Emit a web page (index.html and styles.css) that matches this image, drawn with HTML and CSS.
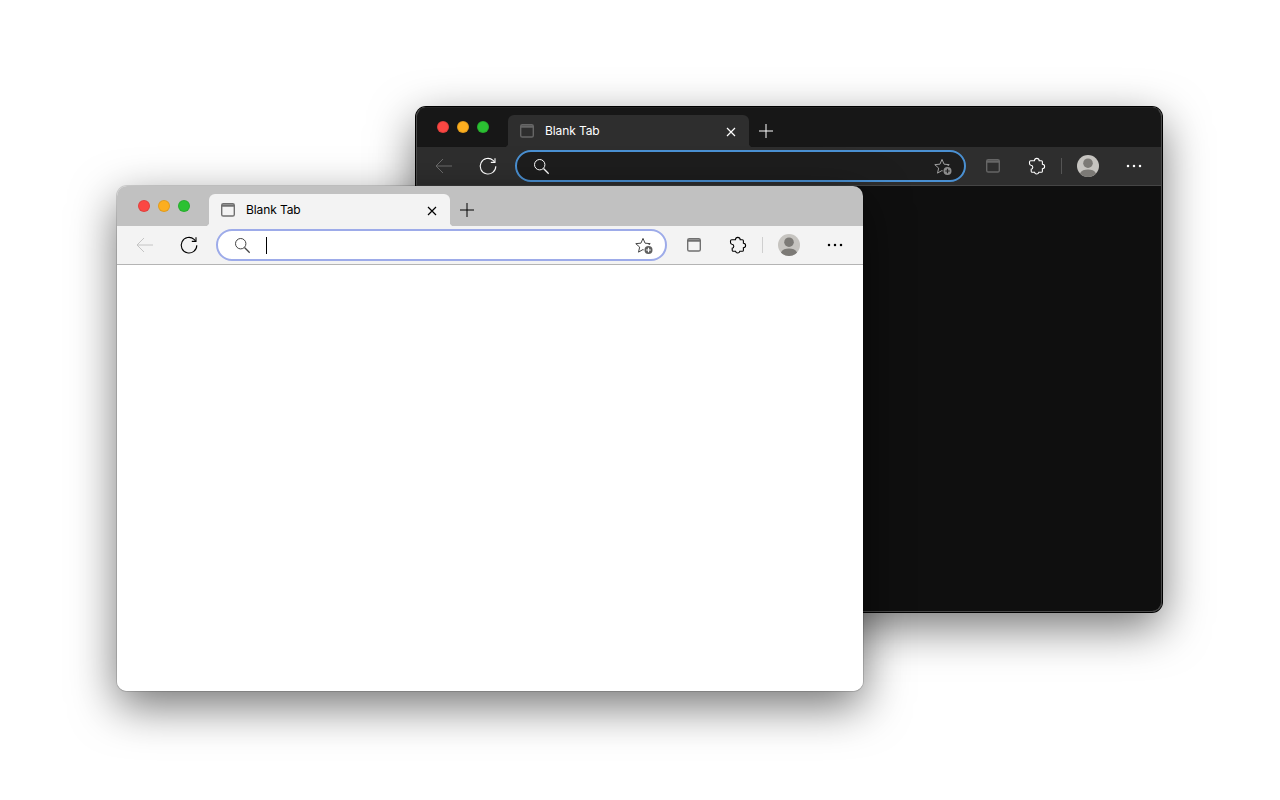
FILE: index.html
```html
<!DOCTYPE html>
<html lang="en">
<head>
<meta charset="utf-8">
<title>Blank Tab</title>
<link rel="stylesheet" href="styles.css">
</head>
<body>
<svg class="sprite" aria-hidden="true">
  <symbol id="i-back" viewBox="0 0 20 20"><path d="M18 10H2M9 3l-7 7 7 7" fill="none" stroke="currentColor" stroke-width="1"/></symbol>
  <symbol id="i-reload" viewBox="0 0 20 20"><path d="M17.800 10.200a7.800 7.800 0 1 1-2.700-5.900l1.400 1.500" fill="none" stroke="currentColor" stroke-width="1.100"/><path d="M17 2.200v4.200h-4.200" fill="none" stroke="currentColor" stroke-width="1.100"/></symbol>
  <symbol id="i-search" viewBox="0 0 20 20"><circle cx="8.700" cy="8.700" r="5.200" fill="none" stroke="currentColor" stroke-width="1"/><path d="M12.500 12.500l5.200 5.200" fill="none" stroke="currentColor" stroke-width="1.300"/></symbol>
  <symbol id="i-star" viewBox="0 0 20 20"><path d="M9 2.400l2.060 4.770 5.170.48-3.900 3.430 1.140 5.070L9 13.500l-4.470 2.650 1.140-5.070-3.900-3.430 5.170-.48z" fill="none" stroke="currentColor" stroke-width="1" stroke-linejoin="round"/><circle cx="14.500" cy="14" r="4.900" fill="var(--addr)"/><circle cx="14.500" cy="14" r="4" fill="var(--badge)"/><path d="M14.500 11.700v4.600M12.200 14h4.600" stroke="var(--badge-plus)" stroke-width="1.200"/></symbol>
  <symbol id="i-tab" viewBox="0 0 16 16"><rect x="1.700" y="1.700" width="12.600" height="12.300" rx="1.600" fill="none" stroke="currentColor" stroke-width="1.400"/><path d="M2 3.600h12" stroke="currentColor" stroke-width="2.400"/></symbol>
  <symbol id="i-puzzle" viewBox="0 0 20 20"><path d="M9.800 2.400c1.400 0 2.300 1 2.400 2.300h2.100c.7 0 1.100.4 1.100 1.100v2.400c1.400.1 2.200 1 2.200 2.200s-.9 2.200-2.200 2.300v2.500c0 .7-.4 1.100-1.100 1.100h-2.500c-.3 1.100-1.100 1.700-2.100 1.700s-1.900-.7-2.100-1.700H5.300c-.7 0-1.100-.4-1.100-1.100v-2c1-.2 1.600-1 1.600-2s-.7-1.900-1.900-2c-.9-.1-1.400-.8-1.400-1.600V6.100c0-.8.500-1.300 1.200-1.300h3.700c.1-1.400 1.100-2.400 2.400-2.400z" fill="none" stroke="currentColor" stroke-width="1.100"/></symbol>
  <symbol id="i-avatar" viewBox="0 0 22 22"><circle cx="11" cy="11" r="11" fill="var(--avatar-bg)"/><circle cx="11" cy="8.200" r="4.800" fill="var(--avatar-fg)"/><path d="M2.900 18.500C4.500 15.300 7.500 14.400 11 14.400s6.500.900 8.100 4.100A11 11 0 0 1 11 22a11 11 0 0 1-8.100-3.500z" fill="var(--avatar-fg)"/></symbol>
  <symbol id="i-more" viewBox="0 0 16 4"><circle cx="2" cy="2" r="1.250" fill="currentColor"/><circle cx="8" cy="2" r="1.250" fill="currentColor"/><circle cx="14" cy="2" r="1.250" fill="currentColor"/></symbol>
  <symbol id="i-close" viewBox="0 0 10 10"><path d="M1 1l8 8M9 1l-8 8" stroke="currentColor" stroke-width="1.200"/></symbol>
  <symbol id="i-plus" viewBox="0 0 14 14"><path d="M7 0v14M0 7h14" stroke="currentColor" stroke-width="1"/></symbol>
</svg>

<main class="desktop">
  <section class="window window-dark">
    <header class="tabstrip">
      <div class="lights"><span class="light red"></span><span class="light amber"></span><span class="light green"></span></div>
      <div class="tab">
        <svg class="ic-tabicon"><use href="#i-tab"/></svg>
        <span class="tab-title">Blank Tab</span>
        <svg class="ic-close"><use href="#i-close"/></svg>
      </div>
      <svg class="ic-plus"><use href="#i-plus"/></svg>
    </header>
    <nav class="toolbar">
      <span class="btn btn-back"><svg class="ic ic-back"><use href="#i-back"/></svg></span>
      <span class="btn"><svg class="ic"><use href="#i-reload"/></svg></span>
      <div class="address">
        <svg class="ic ic-search"><use href="#i-search"/></svg>
        <span class="spacer"></span>
        <svg class="ic ic-star"><use href="#i-star"/></svg>
      </div>
      <span class="btn btn-tabs"><svg class="ic-tabs"><use href="#i-tab"/></svg></span>
      <span class="btn"><svg class="ic ic-puzzle"><use href="#i-puzzle"/></svg></span>
      <span class="sep"></span>
      <span class="btn"><svg class="ic-avatar"><use href="#i-avatar"/></svg></span>
      <span class="btn btn-more"><svg class="ic-more"><use href="#i-more"/></svg></span>
    </nav>
    <div class="page"></div>
  </section>

  <section class="window window-light">
    <header class="tabstrip">
      <div class="lights"><span class="light red"></span><span class="light amber"></span><span class="light green"></span></div>
      <div class="tab">
        <svg class="ic-tabicon"><use href="#i-tab"/></svg>
        <span class="tab-title">Blank Tab</span>
        <svg class="ic-close"><use href="#i-close"/></svg>
      </div>
      <svg class="ic-plus"><use href="#i-plus"/></svg>
    </header>
    <nav class="toolbar">
      <span class="btn btn-back"><svg class="ic ic-back"><use href="#i-back"/></svg></span>
      <span class="btn"><svg class="ic"><use href="#i-reload"/></svg></span>
      <div class="address">
        <svg class="ic ic-search"><use href="#i-search"/></svg>
        <span class="caret"></span>
        <span class="spacer"></span>
        <svg class="ic ic-star"><use href="#i-star"/></svg>
      </div>
      <span class="btn btn-tabs"><svg class="ic-tabs"><use href="#i-tab"/></svg></span>
      <span class="btn"><svg class="ic ic-puzzle"><use href="#i-puzzle"/></svg></span>
      <span class="sep"></span>
      <span class="btn"><svg class="ic-avatar"><use href="#i-avatar"/></svg></span>
      <span class="btn btn-more"><svg class="ic-more"><use href="#i-more"/></svg></span>
    </nav>
    <div class="page"></div>
  </section>
</main>
</body>
</html>
```

FILE: styles.css
```css
* { box-sizing: border-box; }

html, body { margin: 0; height: 100%; background: #fff; overflow: hidden; }

.sprite { position: absolute; width: 0; height: 0; }

.desktop { position: relative; width: 1280px; height: 800px; }

.window {
  position: absolute;
  width: 746px;
  height: 505px;
  border-radius: 10px;
  display: flex;
  flex-direction: column;
  overflow: hidden;
  font-family: Inter, "Liberation Sans", sans-serif;
  color: var(--fg);
}

.window-light {
  left: 117px;
  top: 186px;
  --fg: #000;
  --strip: #c1c1c1;
  --chrome: #f3f3f3;
  --line: #b4b4b4;
  --page: #fff;
  --addr: #fff;
  --addr-border: #9dabe9;
  --muted: #c4c4c4;
  --star: #444;
  --search: #444;
  --tabicon: #707070;
  --sep: #cfcfcf;
  --badge: #5f5f5f;
  --badge-plus: #fff;
  --avatar-bg: #c6c4c0;
  --avatar-fg: #7c7a76;
  box-shadow: 0 0 0 1px rgba(0, 0, 0, .14), 0 15px 46px 0 rgba(0, 0, 0, .55);
}

.window-dark {
  left: 416px;
  top: 107px;
  --fg: #fff;
  --strip: #171717;
  --chrome: #2e2e2e;
  --line: #454545;
  --page: #0f0f0f;
  --addr: #1d1d1d;
  --addr-border: #4a90d2;
  --muted: #6c6c6c;
  --star: #a0a0a0;
  --search: #fff;
  --tabicon: #666;
  --sep: #555;
  --badge: #8c8c8c;
  --badge-plus: #222;
  --avatar-bg: #c6c4c0;
  --avatar-fg: #7c7a76;
  box-shadow: 0 0 0 1px #000, 0 15px 46px 0 rgba(0, 0, 0, .55);
}

.window-dark::after {
  content: "";
  position: absolute;
  inset: 0;
  border: 1px solid #4a4a4a;
  border-top-color: #222;
  border-radius: 10px;
  pointer-events: none;
}

.tabstrip {
  height: 40px;
  flex: none;
  display: flex;
  align-items: flex-end;
  background: var(--strip);
}

.lights {
  width: 92px;
  height: 100%;
  flex: none;
  display: flex;
  gap: 8px;
  padding: 14px 0 0 21px;
}

.light { width: 12px; height: 12px; border-radius: 50%; border: 1px solid rgba(0, 0, 0, .1); }
.red { background: #fb4743; }
.amber { background: #fcae1f; }
.green { background: #2bc132; }

.tab {
  position: relative;
  width: 241px;
  height: 32px;
  flex: none;
  display: flex;
  align-items: center;
  padding: 0 13px 0 11px;
  border-radius: 6px 6px 0 0;
  background: var(--chrome);
}

.tab::before, .tab::after {
  content: "";
  position: absolute;
  bottom: 0;
  width: 4px;
  height: 4px;
}
.tab::before { left: -4px; background: radial-gradient(circle at 0 0, transparent 4px, var(--chrome) 4.500px); }
.tab::after { right: -4px; background: radial-gradient(circle at 100% 0, transparent 4px, var(--chrome) 4.500px); }

.ic-tabicon { width: 16px; height: 16px; color: var(--tabicon); flex: none; }
.tab-title { margin-left: 10px; font-size: 12px; line-height: 16px; letter-spacing: -.1px; flex: 1; }
.ic-close { width: 10px; height: 10px; flex: none; color: var(--fg); margin-top: 1px; }
.ic-plus { width: 14px; height: 14px; flex: none; margin: 0 0 9.5px 9.5px; color: var(--fg); }

.toolbar {
  height: 39px;
  flex: none;
  display: flex;
  align-items: flex-start;
  padding-left: 10px;
  background: var(--chrome);
  border-bottom: 1px solid var(--line);
  color: var(--fg);
}

.btn {
  width: 36px;
  height: 38px;
  flex: none;
  margin-right: 8px;
  display: flex;
  align-items: center;
  justify-content: center;
}

.btn-back { color: var(--muted); }
.btn-tabs { margin-left: 9px; }
.btn-more { margin: 0 0 0 2px; }

.ic { width: 20px; height: 20px; flex: none; }
.ic-tabs { width: 16px; height: 16px; color: var(--tabicon); }
.ic-avatar { width: 22px; height: 22px; }
.ic-more { width: 16px; height: 4px; }

.sep {
  width: 1px;
  height: 16px;
  flex: none;
  margin: 11px 8px 0 -2px;
  background: var(--sep);
}

.address {
  width: 451px;
  height: 32px;
  flex: none;
  margin: 3px 0 0 1px;
  padding: 0 11px 0 14px;
  display: flex;
  align-items: center;
  border: 2px solid var(--addr-border);
  border-radius: 16px;
  background: var(--addr);
}

.ic-search { color: var(--search); margin-top: -1px; }
.caret { width: 1px; height: 17px; margin-left: 14px; background: #000; }
.spacer { flex: 1; }
.ic-star { color: var(--star); margin-top: 1px; }

.page { flex: 1; background: var(--page); }
```
